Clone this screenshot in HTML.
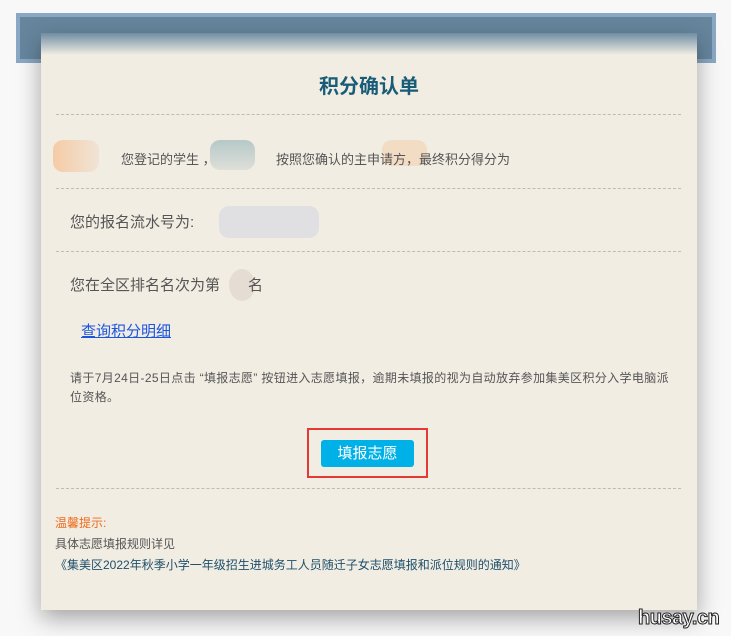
<!DOCTYPE html>
<html><head><meta charset="utf-8"><style>
*{margin:0;padding:0;box-sizing:border-box}
body{width:731px;height:636px;background:#f8f8f8;position:relative;overflow:hidden;font-family:"Liberation Sans","Noto Sans CJK SC",sans-serif;color:#555}
.band{position:absolute;left:16px;top:13px;width:700px;height:50px;background:#66869e;border:4px solid #8aa8c4}
.paper{position:absolute;left:41px;top:33px;width:656px;height:577px;background:#f1ede3;box-shadow:0 8px 22px rgba(0,0,0,.35)}
.paper:before{content:"";position:absolute;left:0;top:0;right:0;height:22px;background:linear-gradient(#6f8da3,rgba(241,237,227,0))}
.t{position:absolute;white-space:nowrap}
.hr{position:absolute;left:15px;width:625px;border-top:1px dashed #bbb}
.blob{position:absolute;border-radius:10px}
</style></head><body>
<div class="band"></div>
<div class="paper">
<div class="t" style="left:0;width:656px;text-align:center;top:37px;font-size:20px;font-weight:bold;color:#195c78">积分确认单</div>
<div class="hr" style="top:81px"></div>
<div class="blob" style="left:12px;top:107px;width:46px;height:32px;background:linear-gradient(90deg,#f5cba6,#f0e4d6)"></div>
<div class="blob" style="left:169px;top:107px;width:45px;height:30px;background:linear-gradient(#b5c9c8,#dedfd8)"></div>
<div class="blob" style="left:341px;top:107px;width:45px;height:26px;background:#f2dcc4"></div>
<div class="t" style="left:80px;top:116px;font-size:13px">您登记的学生 ，</div>
<div class="t" style="left:235px;top:116px;font-size:13px">按照您确认的主申请方，最终积分得分为</div>
<div class="hr" style="top:155px"></div>
<div class="blob" style="left:178px;top:173px;width:100px;height:32px;background:#e0e0e3"></div>
<div class="t" style="left:29px;top:178px;font-size:15px">您的报名流水号为:</div>
<div class="hr" style="top:218px"></div>
<div class="blob" style="left:188px;top:236px;width:26px;height:32px;border-radius:50%;background:#e5ddd3"></div>
<div class="t" style="left:29px;top:241px;font-size:15px">您在全区排名名次为第<span style="display:inline-block;width:28px"></span>名</div>
<div class="t" style="left:40px;top:287px;font-size:15px;color:#1a55e0;text-decoration:underline">查询积分明细</div>
<div class="t" style="left:29px;top:336px;font-size:12px;line-height:19px;white-space:normal;width:600px;letter-spacing:0.35px">请于7月24日-25日点击 “填报志愿” 按钮进入志愿填报，逾期未填报的视为自动放弃参加集美区积分入学电脑派位资格。</div>
<div style="position:absolute;left:266px;top:395px;width:121px;height:50px;border:2px solid #e53935"></div>
<div class="t" style="left:280px;top:407px;width:93px;height:27px;background:#00b1e8;border-radius:3px;color:#fff;font-size:15px;text-align:center;line-height:27px">填报志愿</div>
<div class="hr" style="top:455px"></div>
<div class="t" style="left:14px;top:481px;font-size:12px;color:#f06a1a">温馨提示:</div>
<div class="t" style="left:14px;top:502px;font-size:12px">具体志愿填报规则详见</div>
<div class="t" style="left:14px;top:523px;font-size:12px;color:#1d4f6b">《集美区2022年秋季小学一年级招生进城务工人员随迁子女志愿填报和派位规则的通知》</div>
</div>
<div class="t" style="left:638px;top:607px;font-size:20px;font-weight:bold;color:#fff;-webkit-text-stroke:1px #222;letter-spacing:-0.5px">husay.cn</div>
</body></html>
